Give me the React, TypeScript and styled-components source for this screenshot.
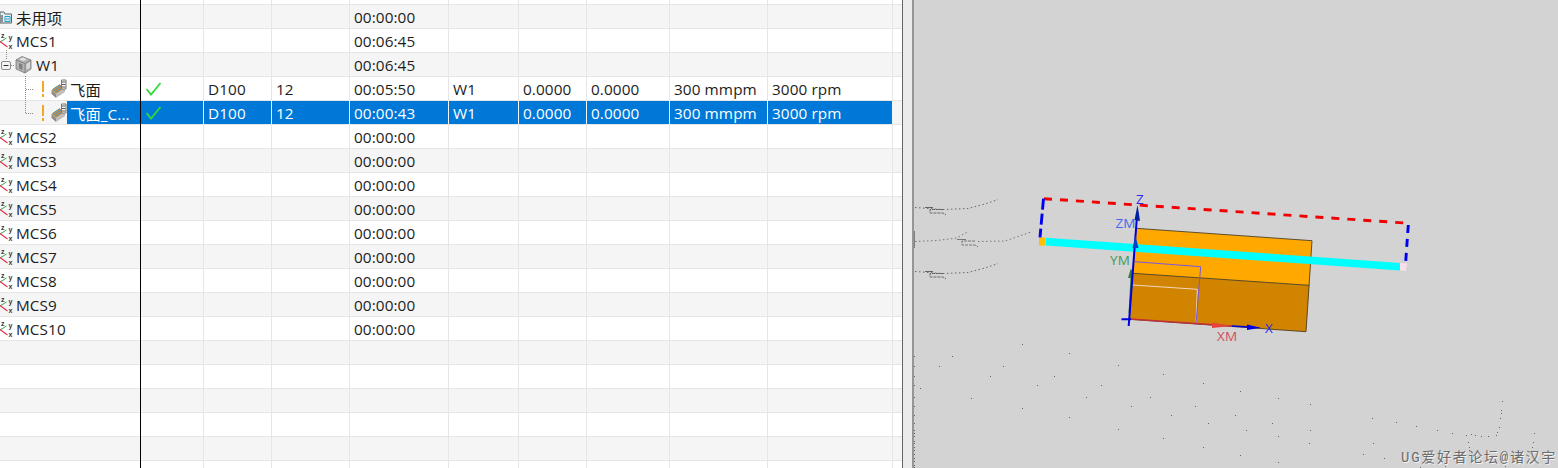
import * as React from "react";
import styled, { createGlobalStyle } from "styled-components";

const GlobalStyle = createGlobalStyle`
  html, body { margin: 0; padding: 0; height: 100%; overflow: hidden; background: #fff; }
  #root { height: 100%; }
`;

const COLUMNS = "141px 63px 68px 78px 99px 70px 68px 83px 98px 125px 9px";

const Page = styled.div`
  display: flex;
  height: 100vh;
  font-family: "Open Sans", "Noto Sans CJK SC", sans-serif;
  font-size: 15.3px;
  letter-spacing: 0.1px;
  color: #1c1c1c;
`;

const Table = styled.div`
  flex: 0 0 902px;
  overflow: hidden;
`;

const Row = styled.div<{ $striped?: boolean; $clipped?: boolean }>`
  display: grid;
  grid-template-columns: ${COLUMNS};
  height: ${(p) => (p.$clipped ? 5 : 24)}px;
  box-sizing: border-box;
  border-bottom: 1px solid #e6e6e6;
  background: ${(p) => (p.$striped ? "#f5f5f5" : "#fff")};
`;

const Cell = styled.div<{ $selected?: boolean }>`
  display: flex;
  align-items: center;
  box-sizing: border-box;
  min-width: 0;
  padding-left: 4px;
  border-right: 1px solid ${(p) => (p.$selected ? "#f0f6fc" : "#e6e6e6")};
  background: ${(p) => (p.$selected ? "#0078d7" : "transparent")};
  color: ${(p) => (p.$selected ? "#fff" : "inherit")};
  white-space: nowrap;
`;

const EndCell = styled.div``;

/* the black frozen-column rule runs unbroken through the row borders */
const TreeCell = styled.div`
  display: flex;
  align-items: center;
  box-sizing: border-box;
  margin-bottom: -1px;
  padding-bottom: 1px;
  border-right: 1px solid #000;
  min-width: 0;
`;

const NodeLabel = styled.span<{ $selected?: boolean }>`
  flex: ${(p) => (p.$selected ? "1" : "0 0 auto")};
  align-self: stretch;
  display: flex;
  align-items: center;
  padding-left: 3px;
  white-space: nowrap;
  background: ${(p) => (p.$selected ? "#0078d7" : "transparent")};
  color: ${(p) => (p.$selected ? "#fff" : "inherit")};
`;

const RootLabel = styled.span`
  margin-left: 2px;
`;

const IconSvg = styled.svg`
  display: block;
  flex: none;
  overflow: visible;
`;

const Splitter = styled.div`
  flex: 0 0 12px;
  box-sizing: border-box;
  background: #ebebeb;
  border-left: 1px solid #666;
  border-right: 2px solid #969696;
`;

const Viewport = styled.div`
  position: relative;
  flex: 1;
  min-width: 0;
  background: #d3d3d3;
`;

const Scene = styled.svg`
  display: block;
  width: 100%;
  height: 100%;
`;

const Watermark = styled.div`
  position: absolute;
  right: 1px;
  bottom: 1px;
  font-family: "Liberation Mono", "Noto Sans CJK SC", monospace;
  font-size: 14px;
  letter-spacing: 1.7px;
  line-height: 18px;
  white-space: nowrap;
  color: #6c6c6c;
  text-shadow: 1px 1px 0 #f2f2f2;
`;

const AxisLabel = styled.text<{ $color: string }>`
  font-family: "Open Sans", sans-serif;
  font-size: 13.5px;
  fill: ${(p) => p.$color};
`;

const McsLetter = styled.text`
  font-family: "Liberation Sans", sans-serif;
  font-size: 7px;
  font-weight: 700;
  fill: #3c3c3c;
`;

const McsIcon = () => (
  <IconSvg width={14} height={16} viewBox="0 0 14 16">
    <path d="M0 9 L6.5 5" stroke="#31a84a" strokeWidth={1} fill="none" />
    <path d="M0 8.5 L7.5 14" stroke="#e0304a" strokeWidth={1.1} fill="none" />
    <McsLetter x={1} y={4.5}>z</McsLetter>
    <McsLetter x={8.5} y={6.5}>y</McsLetter>
    <McsLetter x={8.5} y={16}>x</McsLetter>
  </IconSvg>
);

const FolderIcon = () => (
  <IconSvg width={14} height={16} viewBox="0 0 14 16">
    <path d="M0 3 H4 L5 5 H11.5 V14 H0 Z" fill="#e4eef2" stroke="#566" strokeWidth={1} />
    <path d="M0 6 H3 V13 H0 Z" fill="#8a9498" />
    <path d="M5 7.5 H10 V12.5 H5 Z" fill="none" stroke="#1fa3c8" strokeWidth={1} />
    <path d="M6 10 H9" stroke="#1fa3c8" strokeWidth={1} />
  </IconSvg>
);

const WorkpieceBranch = () => (
  <IconSvg width={34} height={23} viewBox="0 0 34 23">
    <path d="M6.5 -3 V7" stroke="#8b8b8b" strokeDasharray="1 1" fill="none" />
    <path d="M11 12.5 H15" stroke="#8b8b8b" strokeDasharray="1 1" fill="none" />
    <rect x={1.5} y={8.5} width={9} height={8} rx={1.5} fill="#f4f4f4" stroke="#8b8b8b" />
    <path d="M3.5 12.5 H8.5" stroke="#333" />
    <path d="M16 7 L22 3.5 L31 7 V16 L25 20 L16 16 Z" fill="#b4b4b4" stroke="#777" strokeWidth={0.8} />
    <path d="M16 7 L25 10.5 L31 7 M25 10.5 V20" stroke="#777" strokeWidth={0.8} fill="none" />
    <path d="M19 6 L23 4.5 L27 6.5 L23 8 Z" fill="#e2e2e2" />
    <path d="M19 10 L22.5 11.5 V17 L19 15.5 Z" fill="#808080" />
    <path d="M26.5 11 L30 9 V14.5 L26.5 16.5 Z" fill="#dadada" />
  </IconSvg>
);

const OperationBranch = ({ last }: { last?: boolean }) => (
  <IconSvg width={67} height={23} viewBox="0 0 67 23">
    <path d={last ? "M25.5 -1 V12" : "M25.5 -1 V24"} stroke="#8b8b8b" strokeDasharray="1 1" fill="none" />
    <path d="M26 12.5 H34" stroke="#8b8b8b" strokeDasharray="1 1" fill="none" />
    <path d="M43 4 V15" stroke="#f5a623" strokeWidth={2} />
    <path d="M43 17 V20" stroke="#f5a623" strokeWidth={2} />
    <path d="M51.5 13 L60 7.5 L65 11 L56 17 Z" fill="#e08a3c" />
    <path d="M52.5 12.5 L60 7.5 M54 14 L61.5 9 M55.5 15.5 L63 10.5" stroke="#2f9cc0" strokeWidth={1} />
    <path d="M51.5 13 L56 17 V21 L51.5 17 Z" fill="#8d8d8d" />
    <path d="M56 17 L65 11 V15 L56 21 Z" fill="#bdbdbd" />
    <path d="M61.5 3 H66 V12 H61.5 Z" fill="#fff" stroke="#777" strokeWidth={1} />
    <path d="M62 5 H65.5 M62 7.5 H65.5 M62 10 H65.5" stroke="#555" strokeWidth={1} />
  </IconSvg>
);

const Check = () => (
  <IconSvg width={16} height={14} viewBox="0 0 16 14">
    <path d="M1.5 7 L6 12.5 L15.5 1" stroke="#2fdc35" strokeWidth={1.8} fill="none" />
  </IconSvg>
);

type RowData = {
  name: string;
  kind: "folder" | "mcs" | "workpiece" | "op" | "opLast" | "empty";
  time?: string;
  values?: string[];
};

const OP_TAIL = ["W1", "0.0000", "0.0000", "300 mmpm", "3000 rpm"];

const rows: RowData[] = [
  { name: "未用项", kind: "folder", time: "00:00:00" },
  { name: "MCS1", kind: "mcs", time: "00:06:45" },
  { name: "W1", kind: "workpiece", time: "00:06:45" },
  { name: "飞面", kind: "op", time: "00:05:50", values: OP_TAIL },
  { name: "飞面_C...", kind: "opLast", time: "00:00:43", values: OP_TAIL },
  ...[2, 3, 4, 5, 6, 7, 8, 9, 10].map(
    (n): RowData => ({ name: `MCS${n}`, kind: "mcs", time: "00:00:00" })
  ),
  ...Array.from({ length: 6 }, (): RowData => ({ name: "", kind: "empty" })),
];

const TreeContent = ({ row }: { row: RowData }) => {
  switch (row.kind) {
    case "folder":
      return (
        <>
          <FolderIcon />
          <RootLabel>{row.name}</RootLabel>
        </>
      );
    case "mcs":
      return (
        <>
          <McsIcon />
          <RootLabel>{row.name}</RootLabel>
        </>
      );
    case "workpiece":
      return (
        <>
          <WorkpieceBranch />
          <RootLabel>{row.name}</RootLabel>
        </>
      );
    case "op":
      return (
        <>
          <OperationBranch />
          <NodeLabel>{row.name}</NodeLabel>
        </>
      );
    case "opLast":
      return (
        <>
          <OperationBranch last />
          <NodeLabel $selected>{row.name}</NodeLabel>
        </>
      );
    default:
      return null;
  }
};

const TableRow = ({ row, index }: { row: RowData; index: number }) => {
  const selected = row.kind === "opLast";
  const isOp = row.kind === "op" || selected;
  const values = row.values ?? ["", "", "", "", ""];
  return (
    <Row $striped={index % 2 === 0}>
      <TreeCell>
        <TreeContent row={row} />
      </TreeCell>
      <Cell $selected={selected}>{isOp && <Check />}</Cell>
      <Cell $selected={selected}>{isOp ? "D100" : ""}</Cell>
      <Cell $selected={selected}>{isOp ? "12" : ""}</Cell>
      <Cell $selected={selected}>{row.time}</Cell>
      {values.map((v, i) => (
        <Cell key={i} $selected={selected}>
          {v}
        </Cell>
      ))}
      <EndCell />
    </Row>
  );
};

const emptyCells = Array.from({ length: 9 });

// stray toolpath points in the graphics window, page coordinates
const DOTS: [number, number][] = [
  [1022, 344], [1069, 353], [952, 356], [939, 366], [1003, 366], [1118, 365], [1163, 374],
  [990, 376], [1054, 376], [1203, 383], [1037, 385], [1101, 385], [920, 388], [1240, 391],
  [971, 398], [1086, 397], [1150, 397], [1278, 398], [1310, 404], [1131, 406], [1195, 406],
  [1022, 408], [1171, 415], [1235, 415], [1069, 417], [1208, 423], [1272, 423], [1118, 429],
  [1246, 430], [1310, 430], [1278, 436], [1163, 438], [1309, 443], [1203, 447], [1240, 455],
  [1278, 462], [1502, 401], [1501, 410], [1501, 413], [1500, 418], [1499, 427], [1497, 432],
  [1496, 435], [1372, 418], [1396, 422], [1416, 426], [1437, 430], [1452, 433], [1466, 435],
  [1471, 434], [1475, 435], [1481, 436], [1488, 436], [1534, 433], [1373, 443], [1363, 454],
  [1384, 458], [1468, 442], [1469, 447], [1469, 450], [1533, 442], [1532, 447], [1530, 453],
  [914, 356], [914, 366], [914, 376], [914, 385], [914, 397], [914, 406], [914, 415], [914, 423],
  [914, 430], [914, 433], [914, 436], [914, 441], [914, 443], [914, 447], [914, 450], [914, 454],
  [914, 458], [914, 461], [914, 465], [914, 467], [1420, 467], [1445, 466], [1505, 466],
];

const Wire = ({ dy }: { dy: number }) => (
  <g transform={`translate(0 ${dy})`} fill="none" stroke="#666">
    <path d="M915 207.5 L943 209.5 L968 208.5 L985 204 L998 199.5" strokeDasharray="1.5 2.5" />
    <path d="M925 207.5 H933" />
    <path d="M943 209.5 H930 V213 H943 L946 215" strokeDasharray="3 1" />
  </g>
);

const SceneDrawing = () => (
  <Scene viewBox="914 0 644 468" preserveAspectRatio="xMinYMin slice">
    {DOTS.map(([x, y], i) => (
      <rect key={i} x={x} y={y} width={1} height={1} fill="#666" />
    ))}
    <Wire dy={0} />
    <Wire dy={64} />
    <g fill="none" stroke="#777">
      <path d="M915 241.5 L937 240.5 L957 238 L967 232" strokeDasharray="1.5 2.5" />
      <path d="M957 239.5 H966" />
      <path d="M975 241 H962 V245 H975 L978 247" strokeDasharray="3 1" />
      <path d="M978 241.5 L1005 241 L1031 232" strokeDasharray="1.5 2.5" />
      <path d="M914.5 231 V248" stroke="#808080" />
    </g>

    <polygon points="1136,228.3 1312,240.7 1309.3,285.3 1132.7,273.3" fill="#ffa900" />
    <polygon points="1132.7,273.3 1309.3,285.3 1306,331.7 1129.3,319.3" fill="#d18400" />
    <path
      d="M1136 228.3 L1312 240.7 L1306 331.7 L1129.3 319.3 Z M1132.7 273.3 L1309.3 285.3"
      fill="none"
      stroke="#4d3f24"
      strokeWidth={0.9}
    />
    <path d="M1132.7 285 L1197.3 289.3 L1196 323" fill="none" stroke="#efd8bc" strokeWidth={1} />
    <path d="M1135 261.7 L1200.7 266.7 L1196 323.3" fill="none" stroke="#7a55e0" strokeWidth={1} />

    <polygon points="1046,237.7 1400,262.9 1400,270.5 1046,245.5" fill="#00ffff" />
    <rect x={1039} y={237.5} width={6.5} height={8} fill="#ffc000" />
    <polygon points="1400,263 1407,263.5 1406,271 1400,270.5" fill="#fadfe8" />

    <path d="M1044 198.7 L1409.3 223.3" stroke="#f00000" strokeWidth={2.9} strokeDasharray="8 8" fill="none" />
    <path d="M1043.5 198.7 L1040 237.3" stroke="#0000f0" strokeWidth={2.9} strokeDasharray="11 4" fill="none" />
    <path d="M1408.3 225 L1405.7 261.7" stroke="#0000f0" strokeWidth={2.9} strokeDasharray="8 6" fill="none" />

    <path d="M1129.3 313 L1131.7 270" stroke="#2f7f3c" strokeWidth={1.5} fill="none" />
    <polygon points="1128,278 1131,268 1133,278" fill="#2f7f3c" />
    <path d="M1129.5 319 L1232 326" stroke="#c22f3a" strokeWidth={1.4} fill="none" />
    <polygon points="1212,322.5 1232,326 1212,328" fill="#e8423c" />
    <path d="M1232 326 L1250 327" stroke="#0000e0" strokeWidth={1.5} fill="none" />
    <polygon points="1247,324.5 1261,327.7 1247,330" fill="#0000e0" />
    <path d="M1121.5 319.3 H1131 M1128.7 326 L1137.3 212" stroke="#0000e0" strokeWidth={2} fill="none" />
    <polygon points="1134.5,220 1137.5,205 1140,221" fill="#00209f" />
    <polygon points="1132.5,248 1135.5,236 1138.5,248" fill="#0040c8" />

    <AxisLabel $color="#2a2af0" x={1136} y={204}>Z</AxisLabel>
    <AxisLabel $color="#4468f0" x={1115.5} y={228}>ZM</AxisLabel>
    <AxisLabel $color="#3f9a54" x={1110} y={265}>YM</AxisLabel>
    <AxisLabel $color="#d25060" x={1217} y={341}>XM</AxisLabel>
    <AxisLabel $color="#2a2af0" x={1265} y={333}>X</AxisLabel>
  </Scene>
);

export default function App() {
  return (
    <>
      <GlobalStyle />
      <Page>
        <Table>
          <Row $clipped>
            <TreeCell />
            {emptyCells.map((_, i) => (
              <Cell key={i} />
            ))}
            <EndCell />
          </Row>
          {rows.map((row, i) => (
            <TableRow key={i} row={row} index={i} />
          ))}
        </Table>
        <Splitter />
        <Viewport>
          <SceneDrawing />
          <Watermark>UG爱好者论坛@诸汉宇</Watermark>
        </Viewport>
      </Page>
    </>
  );
}
